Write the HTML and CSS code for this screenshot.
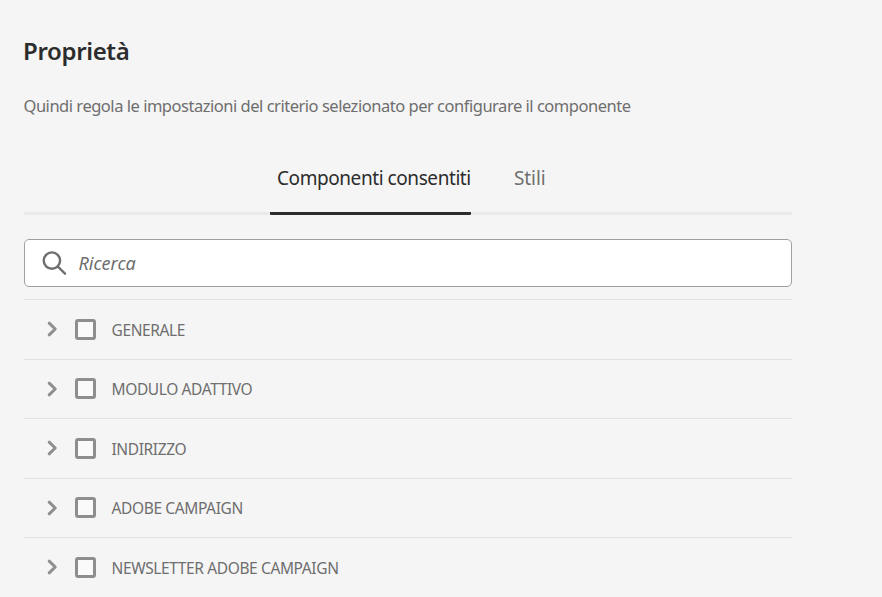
FILE: index.html
```html
<!DOCTYPE html>
<html lang="it">
<head>
<meta charset="utf-8">
<title>Proprietà</title>
<link rel="stylesheet" href="styles.css">
</head>
<body>
<main class="panel">
<h1 class="title">Proprietà</h1>
<p class="intro">Quindi regola le impostazioni del criterio selezionato per configurare il componente</p>
<nav class="tabs"><a class="tab active">Componenti consentiti</a><a class="tab">Stili</a></nav>
<div class="search"><svg width="26" height="26" viewBox="0 0 26 26"><circle cx="9.9" cy="10.6" r="8.2"/><path d="M15.8 16.5L23 23.7"/></svg><span>Ricerca</span></div>
<ul class="groups">
<li class="group"><svg class="chevron" viewBox="0 0 12 16"><path d="M3.2 2.2L9.2 8L3.2 13.8"/></svg><i class="box"></i><span>GENERALE</span></li>
<li class="group"><svg class="chevron" viewBox="0 0 12 16"><path d="M3.2 2.2L9.2 8L3.2 13.8"/></svg><i class="box"></i><span>MODULO ADATTIVO</span></li>
<li class="group"><svg class="chevron" viewBox="0 0 12 16"><path d="M3.2 2.2L9.2 8L3.2 13.8"/></svg><i class="box"></i><span>INDIRIZZO</span></li>
<li class="group"><svg class="chevron" viewBox="0 0 12 16"><path d="M3.2 2.2L9.2 8L3.2 13.8"/></svg><i class="box"></i><span>ADOBE CAMPAIGN</span></li>
<li class="group"><svg class="chevron" viewBox="0 0 12 16"><path d="M3.2 2.2L9.2 8L3.2 13.8"/></svg><i class="box"></i><span>NEWSLETTER ADOBE CAMPAIGN</span></li>
</ul>
</main>
</body>
</html>
```
FILE: styles.css
```css
* { box-sizing: border-box; }
body { margin: 0; height: 597px; overflow: hidden; background: #f5f5f5; color: #6e6e6e; font-family: "Noto Sans", sans-serif; }
.panel { width: 768px; margin-left: 24px; padding-top: 34px; }
.title { margin: 0 0 0 -1px; font-size: 24px; line-height: 34px; font-weight: 600; color: #2c2c2c; letter-spacing: -0.35px; }
.intro { margin: 24px 0 0 -0.5px; font-size: 16.5px; line-height: 28px; letter-spacing: -0.48px; white-space: nowrap; }
.tabs { display: flex; height: 60px; margin-top: 35px; padding-left: 246px; border-bottom: 3px solid #eaeaea; }
.tab { height: 60px; padding: 8px 0 0 7px; font-size: 19px; line-height: 30px; white-space: nowrap; letter-spacing: -0.43px; }
.tab:last-child { letter-spacing: -0.1px; }
.tab.active { width: 201px; margin-right: 36px; color: #2c2c2c; background: linear-gradient(#2c2c2c, #2c2c2c) bottom / 100% 3px no-repeat; border-radius: 1px; }
.search { display: flex; align-items: center; height: 48px; margin-top: 24px; padding-left: 17px; gap: 10.5px; background: #fff; border: 1px solid #a0a0a0; border-radius: 5px; font-size: 18px; font-style: italic; }
.search svg { fill: none; stroke: #6e6e6e; stroke-width: 2.4; stroke-linecap: round; }
.groups { margin: 12px 0 0; padding: 0; list-style: none; }
.group { display: flex; align-items: center; height: 59.5px; padding-left: 22px; border-top: 1px solid #e1e1e1; font-size: 15.5px; letter-spacing: -0.38px; white-space: nowrap; }
.group span { margin: 1px 0 0 0.5px; }
.chevron { width: 12px; height: 16px; fill: none; stroke: #8e8e8e; stroke-width: 3; stroke-linecap: round; stroke-linejoin: round; }
.box { width: 21px; height: 21px; margin: 0 15px 0 17px; background: #fafafa; border: 3px solid #8e8e8e; border-radius: 3px; }
```
